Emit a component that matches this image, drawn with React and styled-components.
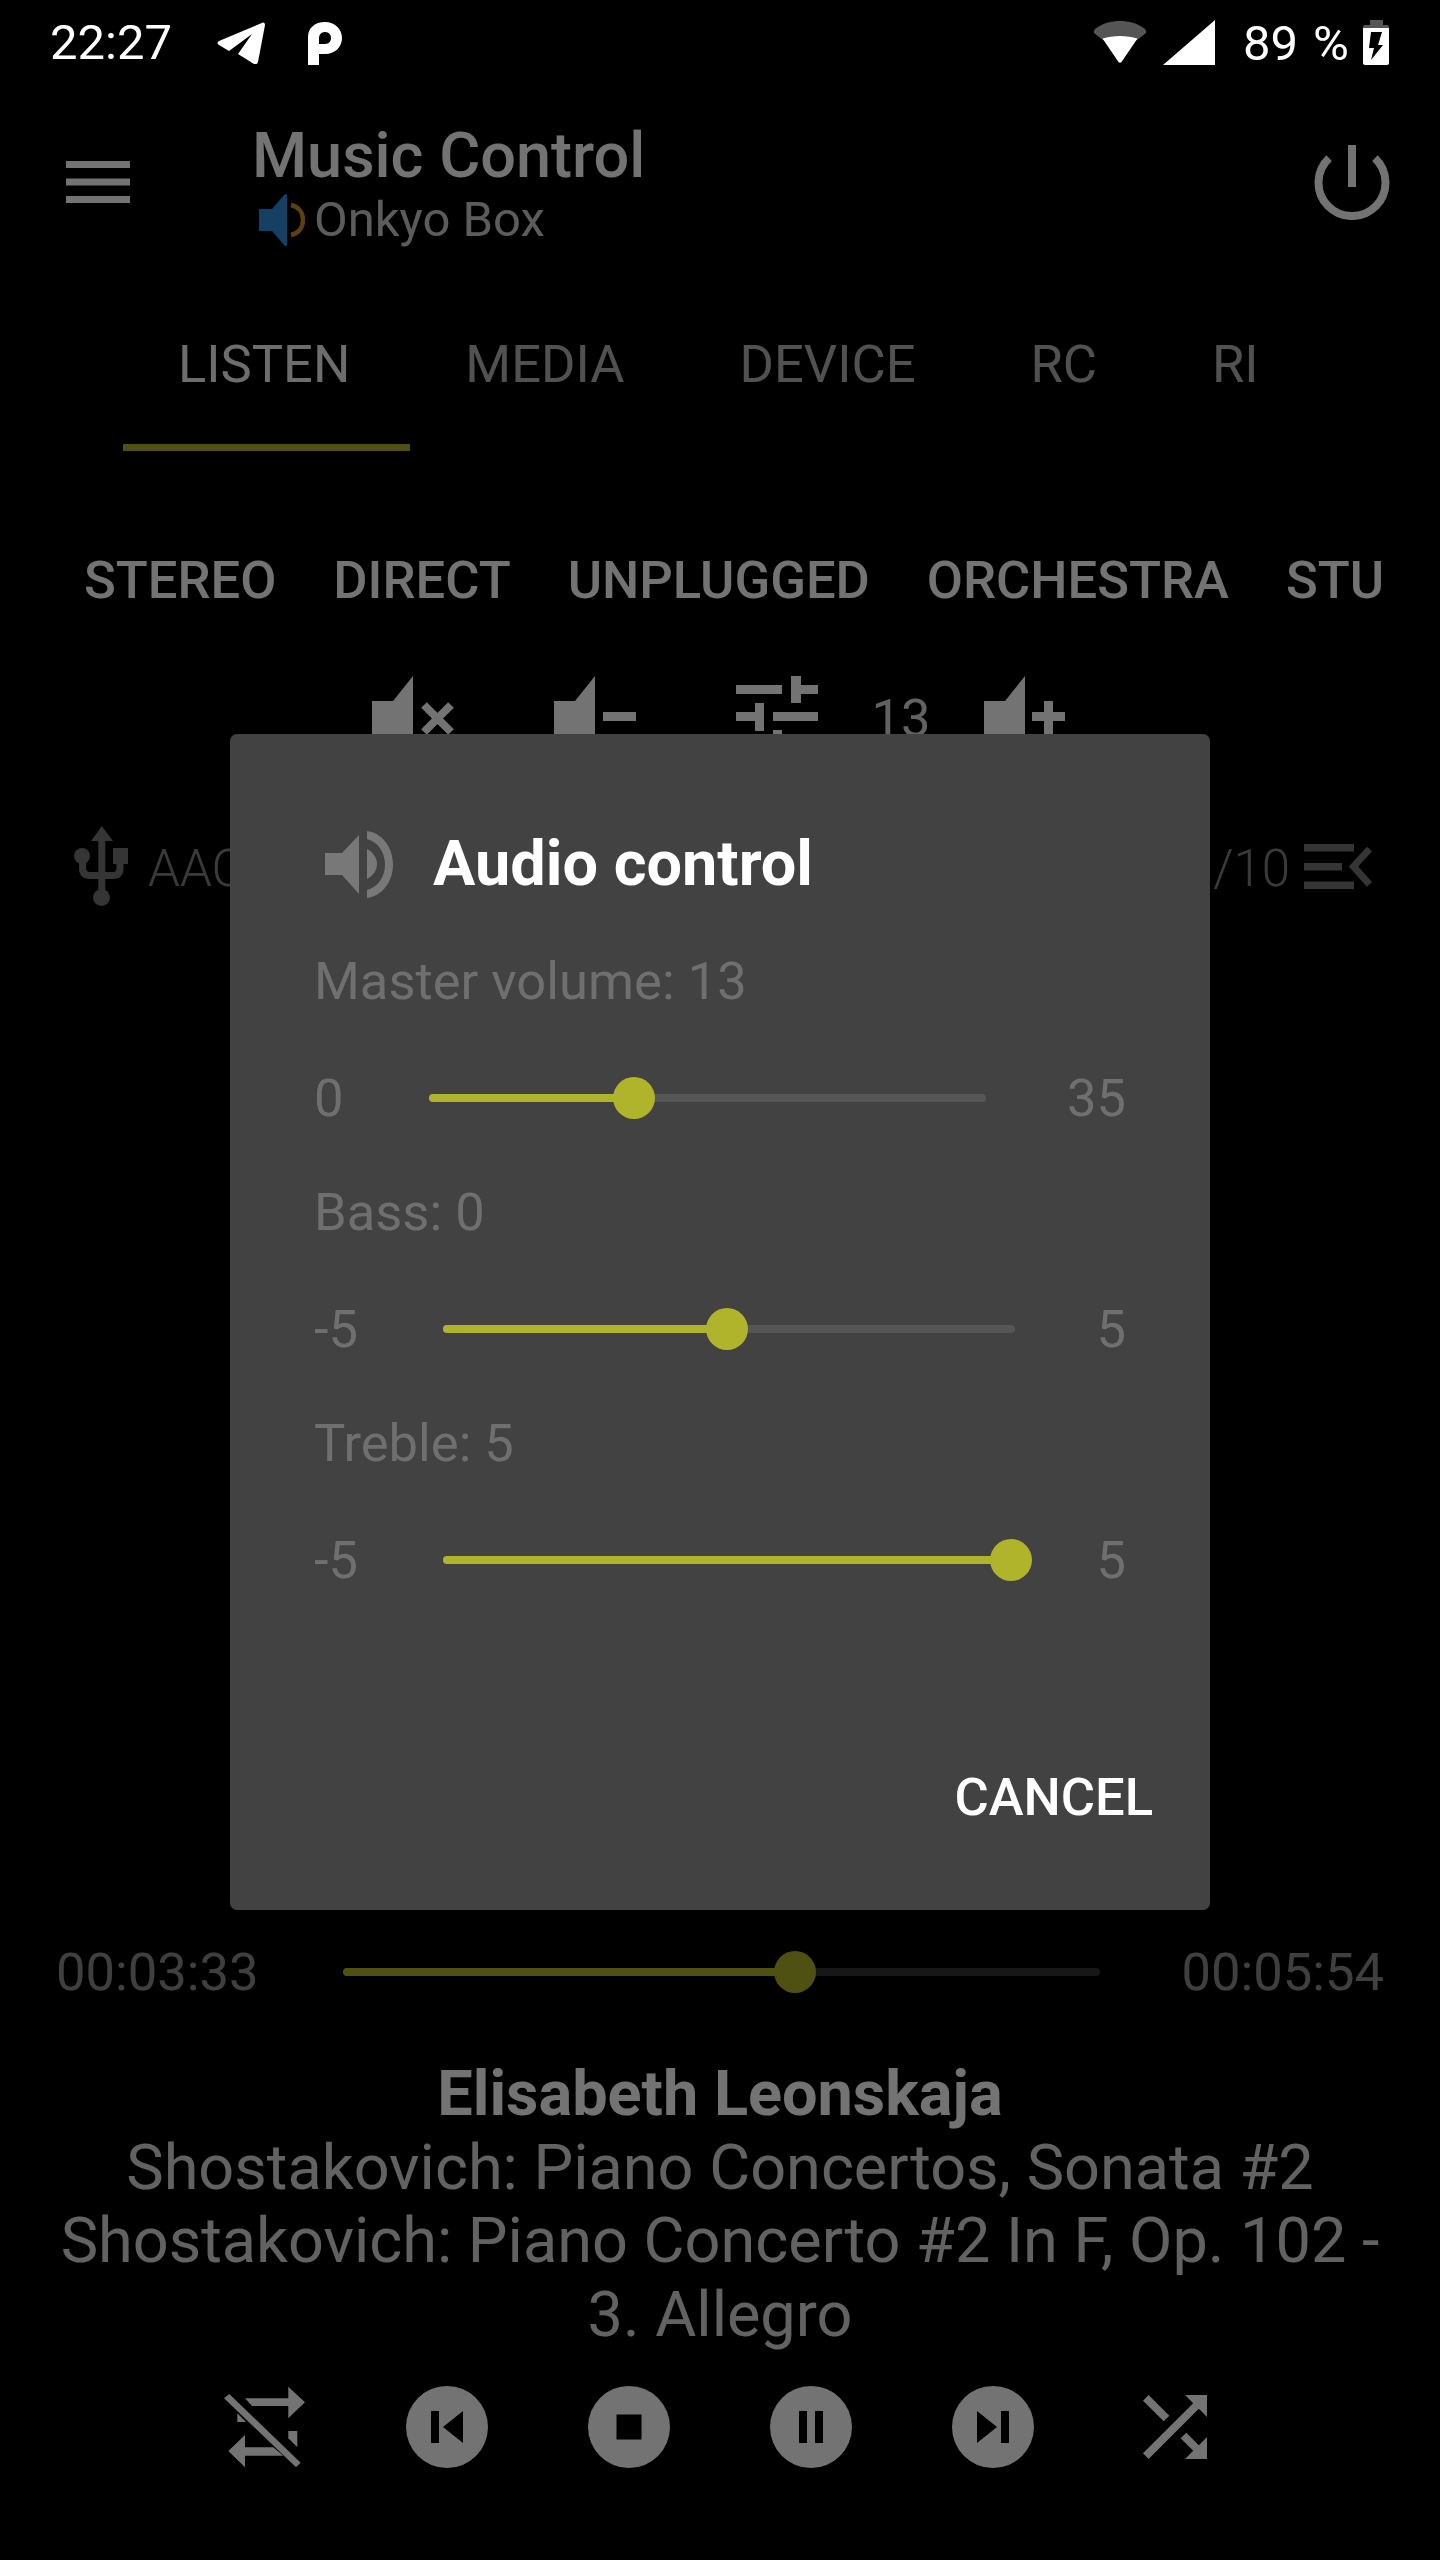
import React from "react";
import styled, { createGlobalStyle } from "styled-components";

const GlobalStyle = createGlobalStyle`
  html, body {
    margin: 0;
    padding: 0;
    background: #000;
  }
  body {
    font-family: Roboto, "Liberation Sans", sans-serif;
  }
`;

const ACCENT = "#afb42b";
const DIM = "#757575";

const Hamburger = () => (
  <svg width="64" height="42" viewBox="0 0 64 42" fill="#fff">
    <rect width="64" height="7" />
    <rect y="17.5" width="64" height="7" />
    <rect y="35" width="64" height="7" />
  </svg>
);

const TelegramIcon = () => (
  <svg width="48" height="42" viewBox="0 0 48 42" fill="#fff">
    <path d="M46 0.5 L2 19 Q-1 21 2 23 L12 29 L35 12 L21 32 L37 42 Q40 43 41 40 L48 3 Q48 0 46 0.5 Z" />
  </svg>
);

const ParkingIcon = () => (
  <svg width="34" height="43" viewBox="0 0 34 43" fill="#fff" fillRule="evenodd">
    <path d="M0 43 V15 C0 6 7 0 17 0 C27 0 34 7 34 16 C34 25 27 32 17 32 H11 V43 Z M17 10 C13 10 11 13 11 16 V22 H17 C21 22 23 19 23 16 C23 13 21 10 17 10 Z" />
  </svg>
);

const WifiIcon = () => (
  <svg width="54" height="42" viewBox="0 0 54 42">
    <path fill="#555" d="M1 12 Q0 10 2 8 C10 2 18 0 27 0 C36 0 44 2 52 8 Q54 10 53 12 L44 19 L10 19 Z" />
    <path fill="#fff" d="M9.5 17.5 C15 16 21 15 27 15 C33 15 39 16 44.5 17.5 L28.5 41 Q27 42.5 25.5 41 Z" />
  </svg>
);

const SignalIcon = () => (
  <svg width="52" height="45" viewBox="0 0 52 45" fill="#fff">
    <path d="M52 0 V45 H0 Z" />
  </svg>
);

const BatteryIcon = () => (
  <svg width="26" height="45" viewBox="0 0 26 45">
    <path fill="#555" d="M7 0 H20 V5 H24 Q26 5 26 7 V8 H0 V7 Q0 5 2 5 H7 Z" />
    <path fill="#fff" d="M0 8 H26 V43 Q26 45 24 45 H2 Q0 45 0 43 Z" />
    <polygon fill="#000" points="8,12 19,12 15,25 20,25 8,40 11,28 6,28" />
  </svg>
);

const PowerIcon = () => (
  <svg width="76" height="75" viewBox="0 0 76 75" fill="none" stroke="#fff" strokeWidth="8">
    <path d="M15.1 13.1 A33.5 33.5 0 1 0 60.9 13.1" />
    <path d="M38 0 V42" />
  </svg>
);

const ColorSpeaker = () => (
  <svg width="46" height="54" viewBox="0 0 46 54">
    <path fill="#2e8fdc" d="M0 16 H13 L26 1 Q28 0 28 3 V51 Q28 54 26 53 L13 38 H0 Z" />
    <path fill="none" stroke="#d38c24" strokeWidth="4.5" d="M32 12 C41 14 44 21 44 27 C44 33 41 40 32 42" />
  </svg>
);

const VolumeIcon = ({ children }) => (
  <svg width="84" height="84" viewBox="0 0 84 84" fill="#fff">
    <polygon points="0,25 21,25 41,0 41,84 21,59 0,59" />
    {children}
  </svg>
);

const TuneIcon = () => (
  <svg width="84" height="84" viewBox="0 0 84 84" fill="#fff">
    <rect x="0" y="9" width="46" height="9" />
    <rect x="55" y="0" width="10" height="27" />
    <rect x="55" y="9" width="27" height="9" />
    <rect x="0" y="36" width="28" height="9" />
    <rect x="19" y="27" width="9" height="28" />
    <rect x="37" y="36" width="45" height="9" />
    <rect x="37" y="54" width="9" height="28" />
    <rect x="0" y="63" width="37" height="9" />
    <rect x="46" y="63" width="36" height="9" />
  </svg>
);

const UsbIcon = () => (
  <svg width="54" height="81" viewBox="14 17 54 81" fill={DIM}>
    <polygon points="41.7,17 53,32 31,32" />
    <rect x="38.3" y="30" width="7" height="58" />
    <circle cx="22" cy="47" r="8" />
    <rect x="53" y="39" width="15" height="16" />
    <path fill="none" stroke={DIM} strokeWidth="7" d="M22.5 50 V59 Q22.5 66.5 30 66.5 H53 Q60 66.5 60 59 V50" />
    <circle cx="41.5" cy="88.5" r="8.5" />
  </svg>
);

const QueueIcon = () => (
  <svg width="68" height="45" viewBox="0 0 68 45" fill={DIM}>
    <rect width="50" height="7.5" />
    <rect y="19" width="38" height="7.5" />
    <rect y="37.5" width="50" height="7.5" />
    <path fill="none" stroke={DIM} strokeWidth="7" d="M65.5 5 L49.5 22.5 L65.5 40.5" />
  </svg>
);

const RepeatOffIcon = () => (
  <svg width="96" height="96" viewBox="7 9 96 96" fill="#fff">
    <polygon points="35,28.3 78.3,28.3 78.3,16.7 95,32.3 78.3,48.3 78.3,36 42,36" />
    <polygon points="27.3,43.3 36,52 27.3,52" />
    <polygon points="78.3,61 87.3,61 87.3,77.3 78.3,68.3" />
    <polygon points="35,65 18.3,81 35,97.3 35,85.7 73.3,85.7 63.3,77.3 35,77.3" />
    <polygon points="14,28.3 19.3,24 90.7,92.7 86,97.3" />
  </svg>
);

const ShuffleIcon = () => (
  <svg width="96" height="96" viewBox="0 0 24 24" fill="#fff">
    <path d="M10.59 9.17L5.41 4 4 5.41l5.17 5.17 1.42-1.41zM14.5 4l2.04 2.04L4 18.59 5.41 20 17.96 7.46 20 9.5V4h-5.5zm.33 9.41l-1.41 1.41 3.13 3.13L14.5 20H20v-5.5l-2.04 2.04-3.13-3.13z" />
  </svg>
);

const DialogSpeaker = () => (
  <svg width="68" height="67" viewBox="25 20 68 67" fill="#787878">
    <polygon points="25,42 42,42 59,24 59,83 42,64 25,64" />
    <path d="M67 38 C73 41 77 47 77 53 C77 59 73 65 67 68 Z" />
    <path d="M67 20 C82 22 93 36 93 53.5 C93 71 82 85 67 87 V79 C78 76 85 66 85 53.5 C85 41 78 31 67 28 Z" />
  </svg>
);

const modes = ["STEREO", "DIRECT", "UNPLUGGED", "ORCHESTRA", "STU"];
const tabs = ["LISTEN", "MEDIA", "DEVICE", "RC", "RI"];

const audioControls = [
  { label: "Master volume: 13", min: "0", max: "35", value: 13 / 35 },
  { label: "Bass: 0", min: "-5", max: "5", value: 0.5 },
  { label: "Treble: 5", min: "-5", max: "5", value: 1 },
];

const Seek = ({ value, track }) => (
  <SeekBar $track={track}>
    <SeekFill style={{ width: `${value * 100}%` }} />
    <SeekThumb style={{ left: `calc(${value * 100}% - ${value * 4}px)` }} />
  </SeekBar>
);

const App = () => {
  return (
    <Page>
      <GlobalStyle />
      <StatusBar>
        <Clock>22:27</Clock>
        <NotifyIcons>
          <TelegramIcon />
          <ParkingIcon />
        </NotifyIcons>
        <SystemIcons>
          <RadioIcons>
            <WifiIcon />
            <SignalIcon />
          </RadioIcons>
          <BatteryText>89 %</BatteryText>
          <BatteryIcon />
        </SystemIcons>
      </StatusBar>

      <Toolbar>
        <Hamburger />
        <TitleBlock>
          <Title>Music Control</Title>
          <Subtitle>
            <ColorSpeaker />
            Onkyo Box
          </Subtitle>
        </TitleBlock>
        <PowerButton>
          <PowerIcon />
        </PowerButton>
      </Toolbar>

      <Tabs>
        {tabs.map((t, i) => (
          <Tab key={t} $active={i === 0}>
            {t}
          </Tab>
        ))}
      </Tabs>

      <Modes>
        {modes.map((m) => (
          <Mode key={m}>{m}</Mode>
        ))}
      </Modes>

      <VolumeRow>
        <VolumeIcon>
          <path fill="none" stroke="#fff" strokeWidth="8" d="M52 29 L79 56 M79 29 L52 56" />
        </VolumeIcon>
        <VolumeIcon>
          <rect x="49" y="36" width="33" height="9" />
        </VolumeIcon>
        <TuneIcon />
        <VolumeLevel>13</VolumeLevel>
        <VolumeIcon>
          <rect x="48" y="36" width="33" height="9" />
          <rect x="60" y="25" width="9" height="35" />
        </VolumeIcon>
      </VolumeRow>

      <InfoRow>
        <UsbIcon />
        <AacText>AAC</AacText>
        <InfoSpacer />
        <InfoText>1/10</InfoText>
        <QueueIcon />
      </InfoRow>

      <Bottom>
        <TimeRow>
          <TimeText>00:03:33</TimeText>
          <Seek value={0.6} track="rgba(255,255,255,0.2)" />
          <TimeText>00:05:54</TimeText>
        </TimeRow>
        <TrackInfo>
          <Artist>Elisabeth Leonskaja</Artist>
          <div>Shostakovich: Piano Concertos, Sonata #2</div>
          <div>Shostakovich: Piano Concerto #2 In F, Op. 102 - 3. Allegro</div>
        </TrackInfo>
        <Transport>
          <TransportCell>
            <RepeatOffIcon />
          </TransportCell>
          <TransportCell>
            <CircleButton>
              <svg width="82" height="82" viewBox="0 0 82 82" fill="#000">
                <rect x="25" y="25" width="8" height="32" />
                <polygon points="57,25 57,57 37,41" />
              </svg>
            </CircleButton>
          </TransportCell>
          <TransportCell>
            <CircleButton>
              <svg width="82" height="82" viewBox="0 0 82 82" fill="#000">
                <rect x="28.5" y="28.5" width="25" height="25" />
              </svg>
            </CircleButton>
          </TransportCell>
          <TransportCell>
            <CircleButton>
              <svg width="82" height="82" viewBox="0 0 82 82" fill="#000">
                <rect x="29" y="25" width="8" height="32" />
                <rect x="45" y="25" width="8" height="32" />
              </svg>
            </CircleButton>
          </TransportCell>
          <TransportCell>
            <CircleButton>
              <svg width="82" height="82" viewBox="0 0 82 82" fill="#000">
                <polygon points="25,25 25,57 45,41" />
                <rect x="49" y="25" width="8" height="32" />
              </svg>
            </CircleButton>
          </TransportCell>
          <TransportCell>
            <ShuffleIcon />
          </TransportCell>
        </Transport>
      </Bottom>

      <Scrim>
        <Dialog>
          <DialogHeader>
            <DialogSpeaker />
            <DialogTitle>Audio control</DialogTitle>
          </DialogHeader>
          <DialogBody>
            {audioControls.map((c) => (
              <ControlGroup key={c.label}>
                <ControlLabel>{c.label}</ControlLabel>
                <ControlRow>
                  <ControlValue>{c.min}</ControlValue>
                  <Seek value={c.value} track="#565656" />
                  <ControlValue>{c.max}</ControlValue>
                </ControlRow>
              </ControlGroup>
            ))}
          </DialogBody>
          <DialogFooter>
            <CancelButton>CANCEL</CancelButton>
          </DialogFooter>
        </Dialog>
      </Scrim>
    </Page>
  );
};

export default App;

const Page = styled.div`
  position: relative;
  width: 1440px;
  height: 2560px;
  overflow: hidden;
  background: #000;
  color: #fff;
  display: flex;
  flex-direction: column;
`;

const StatusBar = styled.div`
  position: relative;
  z-index: 2;
  height: 84px;
  flex-shrink: 0;
  display: flex;
  align-items: center;
  padding: 0 51px 0 50px;
  box-sizing: border-box;
`;

const Clock = styled.div`
  font-size: 49px;
  line-height: 58px;
  margin-top: 2px;
`;

const NotifyIcons = styled.div`
  display: flex;
  align-items: center;
  gap: 43px;
  margin-left: 45px;
  margin-top: 2px;
`;

const SystemIcons = styled.div`
  margin-left: auto;
  display: flex;
  align-items: center;
`;

const RadioIcons = styled.div`
  display: flex;
  align-items: center;
  gap: 16px;
`;

const BatteryText = styled.div`
  font-size: 49px;
  line-height: 58px;
  margin: 3px 14px 0 28px;
  word-spacing: 3px;
`;

const Toolbar = styled.div`
  height: 196px;
  flex-shrink: 0;
  display: flex;
  align-items: center;
  padding: 0 50px 0 66px;
  box-sizing: border-box;
`;

const TitleBlock = styled.div`
  align-self: flex-start;
  margin: 35px 0 0 122px;
`;

const Title = styled.div`
  font-size: 63px;
  line-height: 74px;
  font-weight: 500;
`;

const Subtitle = styled.div`
  display: flex;
  align-items: center;
  gap: 9px;
  margin: -2px 0 0 7px;
  font-size: 49px;
  line-height: 58px;
  color: rgba(255, 255, 255, 0.8);
`;

const PowerButton = styled.div`
  margin-left: auto;
  display: flex;
`;

const Tabs = styled.div`
  display: flex;
  padding-left: 123px;
  flex-shrink: 0;
`;

const Tab = styled.div`
  padding: 55px 60px 51px 55px;
  font-size: 52.5px;
  line-height: 58px;
  border-bottom: 7px solid ${(p) => (p.$active ? ACCENT : "transparent")};
  color: ${(p) => (p.$active ? "rgba(255,255,255,0.95)" : "rgba(255,255,255,0.7)")};
`;

const Modes = styled.div`
  display: flex;
  gap: 57px;
  margin-top: 100px;
  padding-left: 84px;
  font-size: 52.5px;
  line-height: 58px;
  font-weight: 500;
  flex-shrink: 0;
`;

const Mode = styled.div`
  white-space: nowrap;
`;

const VolumeRow = styled.div`
  display: flex;
  justify-content: center;
  align-items: center;
  gap: 98px;
  margin-top: 67px;
  height: 84px;
  flex-shrink: 0;
`;

const VolumeLevel = styled.div`
  font-size: 52.5px;
  line-height: 58px;
  margin: 0 -45px 0 -47px;
  color: rgba(255, 255, 255, 0.85);
`;

const InfoRow = styled.div`
  display: flex;
  align-items: center;
  gap: 14px;
  margin-top: 66px;
  padding: 0 68px 0 74px;
  height: 81px;
  flex-shrink: 0;
`;

const InfoText = styled.div`
  font-size: 51px;
  line-height: 58px;
  padding-top: 4px;
  font-weight: 300;
  color: rgba(255, 255, 255, 0.5);
`;

const AacText = styled(InfoText)`
  margin-left: 6px;
`;

const InfoSpacer = styled.div`
  flex: 1;
`;

const Bottom = styled.div`
  margin-top: auto;
  padding-bottom: 85px;
  display: flex;
  flex-direction: column;
`;

const TimeRow = styled.div`
  display: flex;
  align-items: center;
  gap: 85px;
  height: 60px;
  padding: 0 56px;
`;

const TimeText = styled.div`
  font-size: 52.5px;
  line-height: 58px;
  color: rgba(255, 255, 255, 0.55);

  &:last-child {
    margin-left: -3px;
  }
`;

const SeekBar = styled.div`
  position: relative;
  flex: 1;
  height: 8px;
  border-radius: 4px;
  background: ${(p) => p.$track};
`;

const SeekFill = styled.div`
  height: 100%;
  border-radius: 4px 0 0 4px;
  background: ${ACCENT};
`;

const SeekThumb = styled.div`
  position: absolute;
  top: 50%;
  width: 42px;
  height: 42px;
  border-radius: 50%;
  background: ${ACCENT};
  transform: translate(-50%, -50%);
`;

const TrackInfo = styled.div`
  margin-top: 55px;
  padding: 0 50px;
  text-align: center;
  font-size: 63px;
  line-height: 73.5px;
  color: rgba(255, 255, 255, 0.85);
`;

const Artist = styled.div`
  font-weight: 700;
  color: #fff;
`;

const Transport = styled.div`
  display: flex;
  justify-content: center;
  margin-top: 28px;
`;

const TransportCell = styled.div`
  width: 182px;
  height: 96px;
  display: flex;
  align-items: center;
  justify-content: center;
`;

const CircleButton = styled.div`
  width: 82px;
  height: 82px;
  border-radius: 50%;
  background: #fff;
  display: flex;
`;

const Scrim = styled.div`
  position: absolute;
  inset: 0;
  z-index: 1;
  background: rgba(0, 0, 0, 0.55);
  padding-top: 84px;
  display: flex;
  align-items: center;
  justify-content: center;
`;

const Dialog = styled.div`
  width: 980px;
  background: #424242;
  border-radius: 7px;
  display: flex;
  flex-direction: column;
`;

const DialogHeader = styled.div`
  display: flex;
  align-items: center;
  gap: 40px;
  height: 84px;
  margin-top: 88px;
  padding-left: 95px;
`;

const DialogTitle = styled.div`
  font-size: 63px;
  line-height: 74px;
  font-weight: 700;
  color: #fff;
`;

const DialogBody = styled.div`
  margin-top: 46px;
  padding: 0 84px;
`;

const ControlGroup = styled.div`
  padding-bottom: 27px;
`;

const ControlLabel = styled.div`
  font-size: 52.5px;
  line-height: 58px;
  color: #6f6f6f;
`;

const ControlRow = styled.div`
  display: flex;
  align-items: center;
  gap: 83px;
  height: 116px;
  margin-top: 30px;
`;

const ControlValue = styled.div`
  font-size: 52.5px;
  line-height: 58px;
  color: #6f6f6f;

  &:first-child {
    margin-right: 2px;
  }
  &:last-child {
    margin-left: -2px;
  }
`;

const DialogFooter = styled.div`
  display: flex;
  justify-content: flex-end;
  margin-top: 110px;
  padding: 0 57px 71px 0;
`;

const CancelButton = styled.div`
  height: 84px;
  line-height: 84px;
  font-size: 52.5px;
  font-weight: 500;
  color: #fff;
`;
